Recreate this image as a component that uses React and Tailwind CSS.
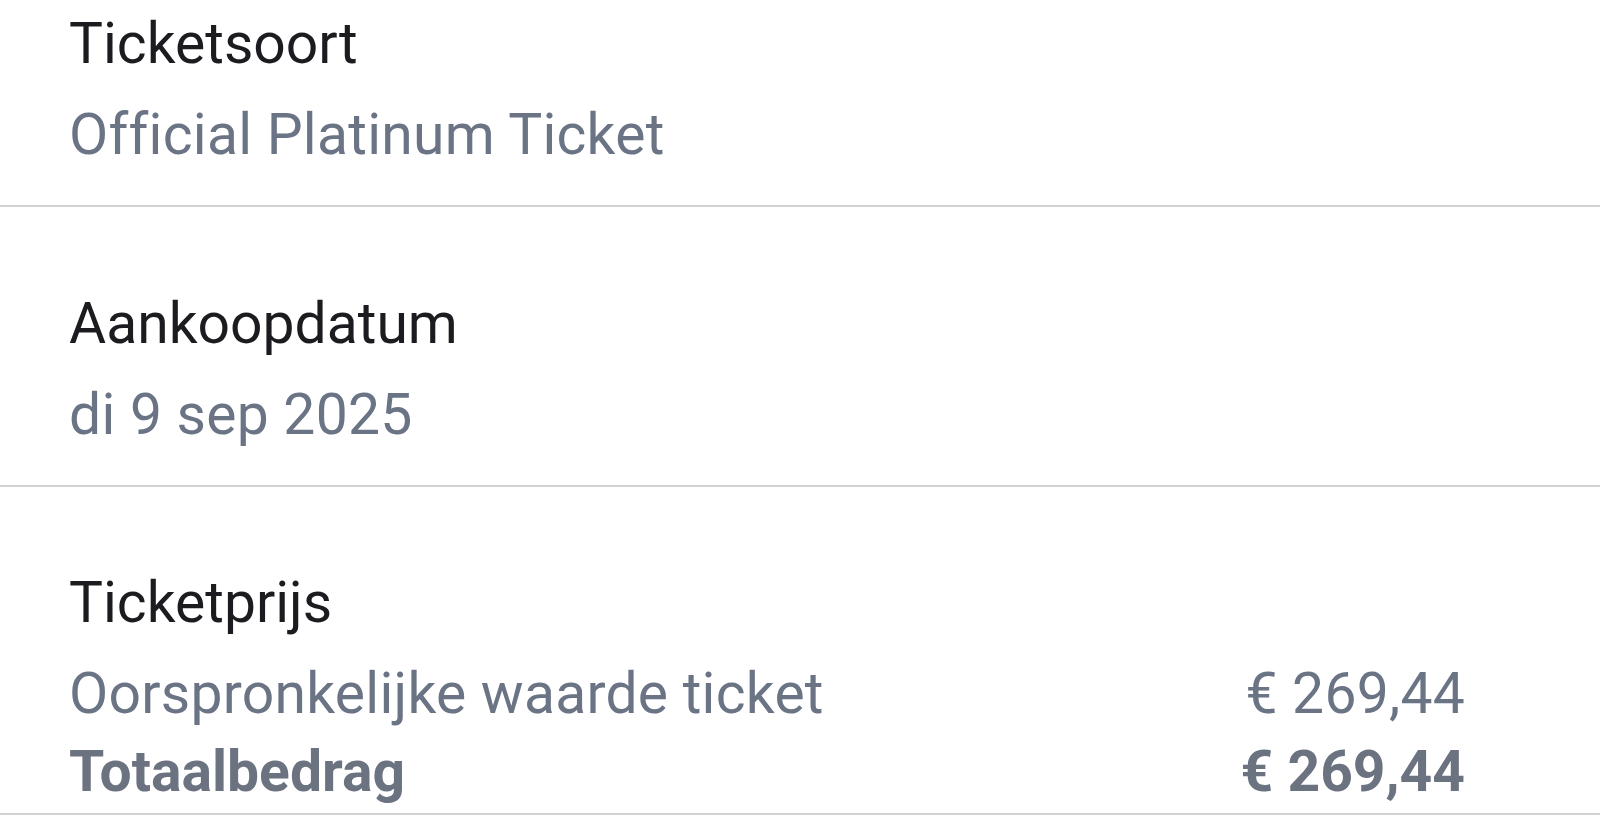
const sections = [
  { label: "Ticketsoort", value: "Official Platinum Ticket" },
  { label: "Aankoopdatum", value: "di 9 sep 2025" },
];

function Label({ children }) {
  return <div className="pl-[69px] leading-[91px] text-[#1c1b1f]">{children}</div>;
}

export default function App() {
  return (
    <div className="h-[815px] overflow-hidden bg-white font-['Roboto','Noto_Sans',sans-serif] text-[57px]">
      {sections.map((s, i) => (
        <section
          key={s.label}
          className={`pb-[25px] border-b-2 border-[#cfd1d5] ${i === 0 ? "-mt-[2px]" : "pt-[71px]"}`}
        >
          <Label>{s.label}</Label>
          <div className="pl-[69px] leading-[91px] tracking-[0.25px] text-[#6a7485]">{s.value}</div>
        </section>
      ))}

      <section className="pt-[70px] pb-[9px] border-b-2 border-[#cfd1d5]">
        <Label>Ticketprijs</Label>
        <div className="flex justify-between pl-[69px] pr-[135px] leading-[91px] tracking-[0.25px] text-[#6a7485]">
          <span>Oorspronkelijke waarde ticket</span>
          <span>€ 269,44</span>
        </div>
        <div className="flex justify-between pl-[69px] pr-[135px] leading-[65px] font-bold text-[#6b7280]">
          <span>Totaalbedrag</span>
          <span>€ 269,44</span>
        </div>
      </section>
    </div>
  );
}
